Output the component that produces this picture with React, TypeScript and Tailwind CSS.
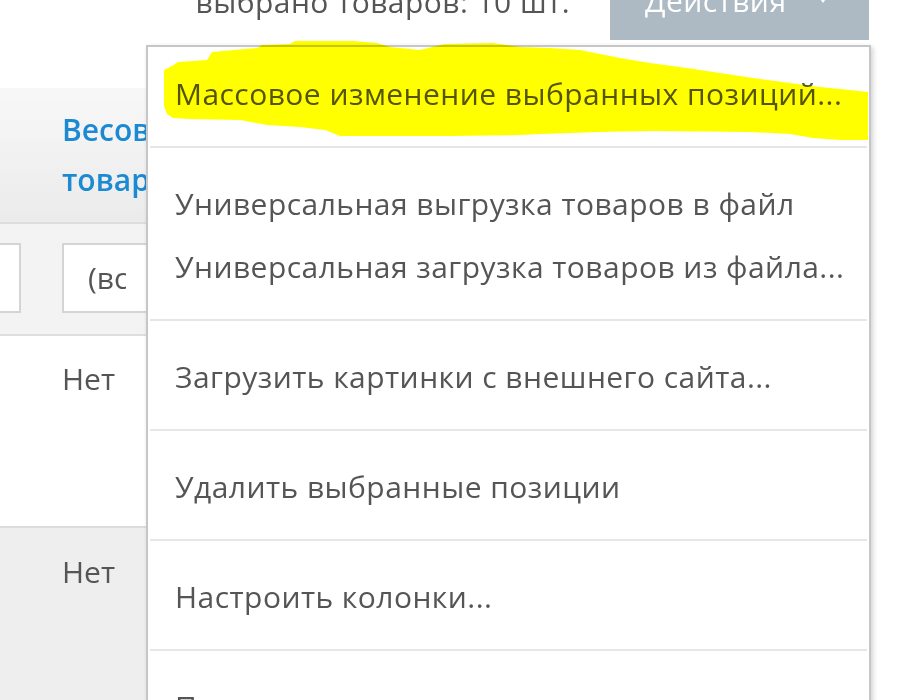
import React from "react";

const highlight =
  "M164,70 L172,66 L178,62 L207,60 L212,52 L257,48 L262,45 L290,44 L295,41 L353,41 L377,43 L390,47 L420,50 L432,47 L445,44 L493,43 L520,47 L550,48 L580,50 L600,54 L620,58 L650,63 L687,68 L720,73 L753,78 L790,83 L820,87 L850,90 L868,92 L868,140 L840,140 L813,138 L790,134 L750,132 L653,131 L600,132 L540,134 L520,135 L450,136 L340,136 L325,130 L300,127 L267,125 L240,120 L190,119 L173,118 L167,114 L164,106 Z";

function Item({ children }: { children: React.ReactNode }) {
  return (
    <div className="h-[63px] leading-[63px] pl-[27px] text-[30px] tracking-[0.45px] text-[#555555] whitespace-nowrap">
      {children}
    </div>
  );
}

function Sep() {
  return <div className="mt-[21px] mb-[24px] mx-[2px] h-[2px] bg-[#e6e6e6]" />;
}

export default function App() {
  return (
    <div className="relative w-[900px] h-[700px] overflow-hidden bg-white font-['Open_Sans',sans-serif]">
      {/* top bar */}
      <div className="flex justify-end items-start h-[88px] pr-[31px]">
        <span className="mt-[-13px] leading-[30px] text-[30px] tracking-[0.45px] text-[#555555] mr-[40px] whitespace-nowrap">
          выбрано товаров: 10 шт.
        </span>
        <div className="flex items-start w-[259px] h-[40px] bg-[#adbac3] overflow-hidden">
          <span className="mt-[-14px] ml-[35px] w-[173px] leading-[30px] text-[30px] tracking-[0.45px] text-white whitespace-nowrap">
            Действия
          </span>
          <span className="mt-[-4px] w-0 h-0 border-l-[5px] border-r-[5px] border-t-[7px] border-l-transparent border-r-transparent border-t-white" />
        </div>
      </div>

      {/* table */}
      <div className="flex flex-col w-[866px] h-[612px]">
        <div className="flex h-[136px] bg-gradient-to-b from-[#f8f8f8] to-[#ebebeb] border-b-2 border-[#dddddd]">
          <div className="w-[42px]" />
          <div className="w-[170px] pl-[20px] flex items-center">
            <span className="text-[30px] leading-[50px] font-semibold text-[#1b8ad3]">
              Весовой товар
            </span>
          </div>
        </div>
        <div className="flex h-[112px] bg-[#f3f3f3] border-b-2 border-[#dedede] pt-[19px]">
          <div className="w-[42px]">
            <div className="w-[21px] h-[70px] bg-white border-2 border-l-0 border-[#d4d4d4]" />
          </div>
          <div className="pl-[20px]">
            <div className="w-[150px] h-[70px] bg-white border-2 border-[#d4d4d4] pl-[24px] flex items-center">
              <span className="w-[38px] overflow-hidden whitespace-nowrap text-[30px] leading-[40px] text-[#555555]">
                (все)
              </span>
            </div>
          </div>
        </div>
        <div className="flex h-[192px] bg-white border-b-2 border-[#dcdcdc] pt-[23px]">
          <div className="w-[62px]" />
          <span className="text-[30px] leading-[40px] text-[#555555]">Нет</span>
        </div>
        <div className="flex flex-1 bg-[#eeeeee] pt-[24px]">
          <div className="w-[62px]" />
          <span className="text-[30px] leading-[40px] text-[#555555]">Нет</span>
        </div>
      </div>

      {/* dropdown menu */}
      <div className="absolute left-[146px] top-[45px] w-[725px] h-[700px] bg-white border-2 border-[#c6c6c6] shadow-[2px_2px_5px_rgba(0,0,0,0.18)] pt-[15px]">
        <Item>Массовое изменение выбранных позиций...</Item>
        <Sep />
        <Item>Универсальная выгрузка товаров в файл</Item>
        <Item>Универсальная загрузка товаров из файла...</Item>
        <Sep />
        <Item>Загрузить картинки с внешнего сайта...</Item>
        <Sep />
        <Item>Удалить выбранные позиции</Item>
        <Sep />
        <Item>Настроить колонки...</Item>
        <Sep />
        <Item>Печать...</Item>
      </div>

      {/* marker highlight */}
      <svg
        className="absolute left-0 top-0 pointer-events-none mix-blend-multiply"
        width="900"
        height="160"
        viewBox="0 0 900 160"
      >
        <path d={highlight} fill="#ffff00" />
      </svg>
    </div>
  );
}
